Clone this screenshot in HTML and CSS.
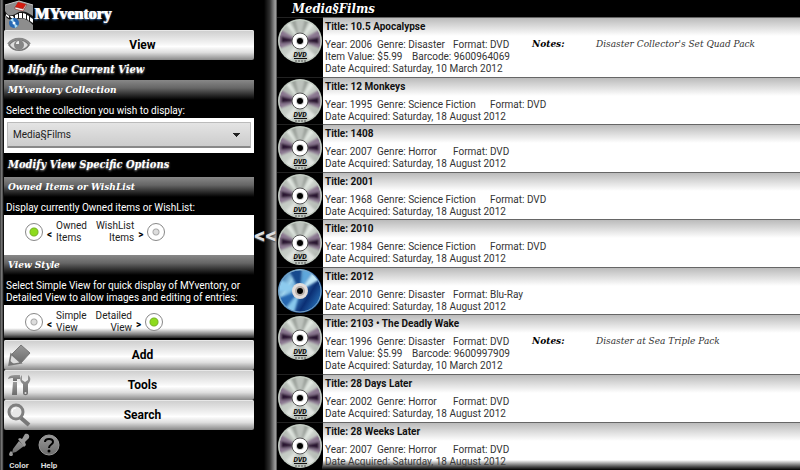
FILE: index.html
```html
<!DOCTYPE html>
<html lang="en">
  <head>
    <meta charset="UTF-8" />
    <meta name="viewport" content="width=device-width, initial-scale=1" />
    <title>MYventory</title>
    <link rel="stylesheet" href="styles.css">
  </head>
  <body>
    <!-- Shared artwork -->
    <svg class="defs" width="0" height="0" aria-hidden="true">
      <defs>
        <linearGradient id="silver" x1="0" y1="0" x2="1" y2="1">
          <stop offset="0" stop-color="#a9b0a9" />
          <stop offset="0.5" stop-color="#c9cfc9" />
          <stop offset="1" stop-color="#aab0aa" />
        </linearGradient>
        <linearGradient id="blue" x1="0" y1="0.2" x2="1" y2="0.8">
          <stop offset="0" stop-color="#1e5b9c" />
          <stop offset="0.25" stop-color="#9fd4ee" />
          <stop offset="0.45" stop-color="#3f86c6" />
          <stop offset="0.7" stop-color="#0b2f74" />
          <stop offset="1" stop-color="#2c7cc2" />
        </linearGradient>
        <linearGradient id="grey" x1="0" y1="0" x2="0" y2="1">
          <stop offset="0" stop-color="#999" />
          <stop offset="1" stop-color="#6c6c6c" />
        </linearGradient>
        <filter id="soft"><feGaussianBlur stdDeviation="1" /></filter>
        <clipPath id="round"><circle cx="22" cy="22" r="21" /></clipPath>
      </defs>
      <symbol id="dvd" viewBox="0 0 44 44">
        <circle cx="22" cy="22" r="22" fill="url(#silver)" />
        <g clip-path="url(#round)">
          <g filter="url(#soft)">
            <path d="M22 22 13 0H31z" fill="#989e98" />
            <path d="M22 22 17 0H27z" fill="#bdc3bd" />
            <path d="M22 22 0 9V30z" fill="#8a7790" />
            <path d="M22 22 3 17V24z" fill="#2b1831" />
            <path d="M22 22 44 9V30z" fill="#8a7790" />
            <path d="M22 22 41 18V25z" fill="#2b1831" />
            <path d="M22 22 5 2 10 0z" fill="#e2e8e2" />
            <path d="M22 22 34 0 39 3z" fill="#e2e8e2" />
            <path d="M22 22 6 39 12 44z" fill="#dfe3df" />
            <path d="M22 22 32 44 39 38z" fill="#dfe3df" />
          </g>
        </g>
        <circle cx="22" cy="22" r="21" fill="none" stroke="#c3cec3" />
        <circle cx="22" cy="22" r="8" fill="#fff" stroke="#555" />
        <circle cx="22" cy="22" r="4" fill="#ccc" />
        <circle cx="22" cy="22" r="3" fill="#000" />
        <path d="M16 39.500H29" stroke="#111" />
        <path d="M17 42H28" stroke="#555" stroke-dasharray="2 1" />
      </symbol>
      <symbol id="bluray" viewBox="0 0 44 44">
        <circle cx="22" cy="22" r="22" fill="url(#blue)" />
        <g clip-path="url(#round)">
          <g filter="url(#soft)">
            <path d="M22 22 10 0H24z" fill="#16498d" />
            <path d="M22 22 26 0H36z" fill="#5ea7db" />
            <path d="M22 22 37 0 44 9z" fill="#bfe6f7" />
            <path d="M22 22 0 9V22z" fill="#8dcbee" />
            <path d="M22 22 0 29 6 40z" fill="#2768b1" />
            <path d="M22 22 6 42 16 44z" fill="#88c8ec" />
          </g>
        </g>
        <circle cx="22" cy="22" r="21" fill="none" stroke="#7ba6c8" />
        <circle cx="22" cy="22" r="8" fill="#e4dedb" />
        <circle cx="22" cy="22" r="5" fill="#b9b0aa" />
        <circle cx="22" cy="22" r="3" fill="#000" />
      </symbol>
    </svg>

    <div class="app">
      <aside class="sidebar">
        <header class="brand">
          <svg class="logo" viewBox="0 0 30 30" aria-hidden="true">
            <path d="M1 5 15 1 29 5V30H1z" fill="#8d8d8d" />
            <path d="M1 5 15 1 29 5" fill="none" stroke="#c8c8c8" />
            <path d="M11 7 14 2 22 4 19 9z" fill="#d51c10" />
            <path d="M11 7v2l8 2 3-5V4l-3 5z" fill="#fff" stroke="#8a0d05" stroke-width="0.500" />
            <path d="M1 11c3 6 7 5 12 2 6-3 10-1 16 3v9c-6-6-10-8-15-6-6 2-11 1-13-4z" fill="#161616" />
            <path d="M2 14l3 2v2l-3-2zM6 16h3l1 2H7zM11 15l3-1v4l-3 1zM15 13l3 0v5l-3 0zM19 13l3 1v5l-3-1zM23 15l2 1v5l-2-2zM26 17l3 2v4l-3-2z" fill="#fff" />
            <circle cx="10" cy="23" r="5" fill="#2769b4" />
            <path d="M10 23 6 20l3-2zM10 23l4 3-3 2z" fill="#a9ddf5" />
            <circle cx="10" cy="23" r="1.500" fill="#fff" />
          </svg>
          <h1>MYventory</h1>
        </header>

        <button class="menu-btn" type="button">
          <svg viewBox="0 0 24 24" aria-hidden="true">
            <path d="M2 12C7 5 17 5 22 12 17 19 7 19 2 12z" fill="#ddd" stroke="#777" stroke-width="1.500" />
            <path d="M1 11C6 4 18 4 23 11" fill="none" stroke="#888" stroke-width="2" />
            <circle cx="12" cy="12" r="5" fill="#858585" />
            <path d="M9 11a3 3 0 0 1 3-3v3z" fill="#eee" />
          </svg>
          View
        </button>

        <h2>Modify the Current View</h2>
        <h3>MYventory Collection</h3>
        <label class="hint" for="collection">Select the collection you wish to display:</label>
        <div class="panel">
          <select id="collection">
            <option>Media§Films</option>
          </select>
        </div>

        <h2 class="tall">Modify View Specific Options</h2>
        <h3>Owned Items or WishList</h3>
        <p class="hint">Display currently Owned items or WishList:</p>
        <div class="panel choices choices-owned">
          <label>
            <input type="radio" name="owned" checked />
            <b>&lt;</b>
            <span>Owned<br />Items</span>
          </label>
          <label class="right">
            <span>WishList<br />Items</span>
            <b>&gt;</b>
            <input type="radio" name="owned" />
          </label>
        </div>

        <h3>View Style</h3>
        <p class="hint">Select Simple View for quick display of MYventory, or Detailed View to allow images and editing of entries:</p>
        <div class="panel choices fade">
          <label>
            <input type="radio" name="style" />
            <b>&lt;</b>
            <span>Simple<br />View</span>
          </label>
          <label class="right">
            <span>Detailed<br />View</span>
            <b>&gt;</b>
            <input type="radio" name="style" checked />
          </label>
        </div>

        <button class="menu-btn" type="button">
          <svg viewBox="0 0 24 24" aria-hidden="true">
            <path d="M14 2 23 10 14 20 5 11z" fill="url(#grey)" stroke="#777" />
            <path d="M4 11 14 20 2 22z" fill="#ddd" stroke="#777" stroke-width="1.500" />
            <path d="M2 22l0-5 5 4z" fill="#777" />
          </svg>
          Add
        </button>
        <button class="menu-btn" type="button">
          <svg viewBox="0 0 24 24" aria-hidden="true">
            <path d="M1 6C2 2 5 2 13 2v4h-3v2H6V5C4 5 3 5 1 6z" fill="url(#grey)" />
            <path d="M6 9h4v13H5z" fill="url(#grey)" />
            <path d="M15 2v5l3 2 3-2V2c4 3 2 7 0 9v9c0 3-5 3-5 0v-9c-3-2-4-6-1-9z" fill="url(#grey)" />
            <circle cx="18.500" cy="20" r="1" fill="#ddd" />
          </svg>
          Tools
        </button>
        <button class="menu-btn" type="button">
          <svg viewBox="0 0 24 24" aria-hidden="true">
            <path d="M14 15 22 22" stroke="#777" stroke-width="4" />
            <circle cx="9" cy="9" r="7" fill="#e8e8e8" stroke="#808080" stroke-width="3" />
            <path d="M5 9a4 4 0 0 1 4-4" fill="none" stroke="#fff" stroke-width="1" />
          </svg>
          Search
        </button>

        <nav class="tools">
          <button type="button">
            <svg viewBox="0 0 24 24" aria-hidden="true">
              <path d="M12 8 17 13 9 19 5 20 6 16z" fill="url(#grey)" />
              <path d="M11 6 13 5 15 6 18 1c3-1 5 1 4 4l-4 4 1 3-2 2z" fill="#999" />
              <path d="M4 18c3 3 2 5 0 5s-3-2 0-5z" fill="#999" />
            </svg>
            Color
          </button>
          <button type="button">
            <svg viewBox="0 0 24 24" aria-hidden="true">
              <circle cx="12" cy="12" r="10" fill="url(#grey)" stroke="#999" />
              <path d="M8 9c0-4 8-4 8 0 0 3-4 2-4 6" fill="none" stroke="#000" stroke-width="2" />
              <circle cx="12" cy="18" r="1.500" fill="#000" />
            </svg>
            Help
          </button>
        </nav>
      </aside>

      <button class="divider" type="button" aria-label="Hide the menu">&lt;&lt;</button>

      <main class="content">
        <h2 class="list-title">Media§Films</h2>
        <ul class="items">
          <li>
            <div class="cover"><svg viewBox="0 0 44 44"><use href="#dvd" /><text x="22" y="38">DVD</text></svg></div>
            <div class="info">
              <h4>Title: 10.5 Apocalypse</h4>
              <p><span class="year">Year: 2006</span><span class="genre">Genre: Disaster</span><span>Format: DVD</span></p>
              <p><span class="value">Item Value: $5.99</span><span>Barcode: 9600964069</span></p>
              <p>Date Acquired: Saturday, 10 March 2012</p>
            </div>
            <p class="notes"><b>Notes:</b><i>Disaster Collector's Set Quad Pack</i></p>
          </li>
          <li>
            <div class="cover"><svg viewBox="0 0 44 44"><use href="#dvd" /><text x="22" y="38">DVD</text></svg></div>
            <div class="info">
              <h4>Title: 12 Monkeys</h4>
              <p><span class="year">Year: 1995</span><span class="genre long">Genre: Science Fiction</span><span>Format: DVD</span></p>
              <p>Date Acquired: Saturday, 18 August 2012</p>
            </div>
          </li>
          <li>
            <div class="cover"><svg viewBox="0 0 44 44"><use href="#dvd" /><text x="22" y="38">DVD</text></svg></div>
            <div class="info">
              <h4>Title: 1408</h4>
              <p><span class="year">Year: 2007</span><span class="genre">Genre: Horror</span><span>Format: DVD</span></p>
              <p>Date Acquired: Saturday, 18 August 2012</p>
            </div>
          </li>
          <li>
            <div class="cover"><svg viewBox="0 0 44 44"><use href="#dvd" /><text x="22" y="38">DVD</text></svg></div>
            <div class="info">
              <h4>Title: 2001</h4>
              <p><span class="year">Year: 1968</span><span class="genre long">Genre: Science Fiction</span><span>Format: DVD</span></p>
              <p>Date Acquired: Saturday, 18 August 2012</p>
            </div>
          </li>
          <li>
            <div class="cover"><svg viewBox="0 0 44 44"><use href="#dvd" /><text x="22" y="38">DVD</text></svg></div>
            <div class="info">
              <h4>Title: 2010</h4>
              <p><span class="year">Year: 1984</span><span class="genre long">Genre: Science Fiction</span><span>Format: DVD</span></p>
              <p>Date Acquired: Saturday, 18 August 2012</p>
            </div>
          </li>
          <li>
            <div class="cover"><svg viewBox="0 0 44 44"><use href="#bluray" /></svg></div>
            <div class="info">
              <h4>Title: 2012</h4>
              <p><span class="year">Year: 2010</span><span class="genre">Genre: Disaster</span><span>Format: Blu-Ray</span></p>
              <p>Date Acquired: Saturday, 18 August 2012</p>
            </div>
          </li>
          <li>
            <div class="cover"><svg viewBox="0 0 44 44"><use href="#dvd" /><text x="22" y="38">DVD</text></svg></div>
            <div class="info">
              <h4>Title: 2103 • The Deadly Wake</h4>
              <p><span class="year">Year: 1996</span><span class="genre">Genre: Disaster</span><span>Format: DVD</span></p>
              <p><span class="value">Item Value: $5.99</span><span>Barcode: 9600997909</span></p>
              <p>Date Acquired: Saturday, 10 March 2012</p>
            </div>
            <p class="notes"><b>Notes:</b><i>Disaster at Sea Triple Pack</i></p>
          </li>
          <li>
            <div class="cover"><svg viewBox="0 0 44 44"><use href="#dvd" /><text x="22" y="38">DVD</text></svg></div>
            <div class="info">
              <h4>Title: 28 Days Later</h4>
              <p><span class="year">Year: 2002</span><span class="genre">Genre: Horror</span><span>Format: DVD</span></p>
              <p>Date Acquired: Saturday, 18 August 2012</p>
            </div>
          </li>
          <li>
            <div class="cover"><svg viewBox="0 0 44 44"><use href="#dvd" /><text x="22" y="38">DVD</text></svg></div>
            <div class="info">
              <h4>Title: 28 Weeks Later</h4>
              <p><span class="year">Year: 2007</span><span class="genre">Genre: Horror</span><span>Format: DVD</span></p>
              <p>Date Acquired: Saturday, 18 August 2012</p>
            </div>
          </li>
        </ul>
      </main>
    </div>
  </body>
</html>
```

FILE: styles.css
```css
:root {
  --serif: "Droid Serif", "DejaVu Serif Condensed", "DejaVu Serif", serif;
  --sans: Roboto, "Liberation Sans", sans-serif;
}
* {
  box-sizing: border-box;
}
body {
  margin: 0;
  background: #000;
  color: #fff;
  font-family: var(--sans);
  font-size: 10px;
  line-height: 12px;
}
h1, h2, h3, h4, p, ul {
  margin: 0;
  padding: 0;
}
button {
  font-family: inherit;
  cursor: pointer;
}
.defs {
  position: absolute;
}
.app {
  display: grid;
  grid-template-columns: 254px 23px 1fr;
  min-height: 100vh;
}

/* Sidebar */
.sidebar {
  display: flex;
  flex-direction: column;
  padding-left: 4px;
  background: linear-gradient(to right, #333, #888 2px, #222 3px, #000 4px);
}
.brand {
  display: flex;
  height: 30px;
}
.logo {
  width: 30px;
  height: 30px;
}
.brand h1 {
  font-family: "Liberation Serif", serif;
  font-size: 16px;
  line-height: 28px;
  text-shadow: 1px 0 0 #fff, 0 1px 2px #4a8ad8;
}
.menu-btn {
  display: grid;
  grid-template-columns: 24px 1fr;
  align-items: center;
  height: 30px;
  padding: 0 0 0 3px;
  border: 0;
  border-radius: 2px;
  background: linear-gradient(#ccc, #f4f4f4 45%, #fff 55%, #ddd 75%, #888);
  box-shadow: inset 0 1px 0 #e8e8e8;
  color: #000;
  font-size: 12px;
  font-weight: 700;
  text-align: center;
}
.menu-btn svg {
  width: 24px;
  height: 24px;
}
.sidebar h2 {
  padding-left: 4px;
  font: italic bold 11px/20px var(--serif);
  text-shadow: 0 1px 2px #aaa;
}
.sidebar h2.tall {
  line-height: 24px;
}
.sidebar h3 {
  padding-left: 4px;
  background: linear-gradient(#888, #666 40%, #000);
  font: italic bold 10px/20px var(--serif);
}
.hint {
  padding: 5px 2px 1px;
}
.panel {
  background: #fff;
  color: #222;
  padding: 4px 3px 3px;
}
.panel select {
  appearance: none;
  display: block;
  width: 100%;
  height: 26px;
  margin-bottom: 2px;
  padding: 0 5px;
  border: 1px solid #bbb;
  border-bottom: 2px solid #888;
  border-radius: 1px;
  background:
    linear-gradient(to bottom left, #222 50%, transparent 50%) right 13px center / 4px 4px no-repeat,
    linear-gradient(to bottom right, #222 50%, transparent 50%) right 9px center / 4px 4px no-repeat,
    linear-gradient(#e4e4e4, #ccc);
  color: #222;
  font: 10px var(--sans);
}
.choices {
  display: flex;
  padding: 4px 21px;
  gap: 9px;
}
.choices-owned {
  min-height: 40px;
}
.choices label {
  display: flex;
  align-items: center;
  height: 26px;
}
.choices b {
  padding-top: 6px;
  margin: 0 4px;
  color: #000;
}
.choices .right {
  text-align: right;
}
.choices input {
  appearance: none;
  width: 18px;
  height: 18px;
  margin: 0;
  border: 1px solid #888;
  border-radius: 50%;
  background: radial-gradient(circle, #ddd 2px, #aaa 3px, #fff 4px);
}
.choices input:checked {
  background: radial-gradient(circle, #8ddb1c 3px, #7ab52a 4px, #fff 5px);
}
.fade {
  padding-bottom: 3px;
  margin-bottom: 2px;
  background: linear-gradient(#fff 70%, #777 90%, #222);
}

.tools {
  display: flex;
  padding: 3px 0 0;
}
.tools button {
  display: flex;
  flex-direction: column;
  align-items: center;
  width: 30px;
  padding: 0;
  border: 0;
  background: none;
  color: #ddd;
  font-size: 8px;
  font-weight: 700;
  gap: 4px;
}
.tools svg {
  width: 24px;
  height: 24px;
}

/* Drawer handle */
.divider {
  padding: 0;
  border: 0;
  background: linear-gradient(to right, #000 10px, #333 16px, #999 21px, #999 22px, #222 23px);
  color: #ddd;
  font-size: 22px;
  font-weight: 700;
  text-shadow: 0 1px 1px #555;
}

/* Item list */
.content {
  position: relative;
  display: flex;
  flex-direction: column;
  padding-bottom: 1px;
}
.content::after {
  content: "";
  position: absolute;
  inset: auto 0 0 45px;
  height: 10px;
  background: linear-gradient(transparent, #444 70%, #000);
  pointer-events: none;
}
.list-title {
  padding-left: 15px;
  font: italic bold 13px/17px var(--serif);
}
.items {
  display: flex;
  flex: 1;
  flex-direction: column;
  list-style: none;
}
.items li {
  display: flex;
  flex: 1 0 auto;
}
.cover {
  width: 46px;
  padding: 1px 0 0 1px;
  border-top: 1px solid #222;
}
.cover svg {
  display: block;
  width: 44px;
  height: 44px;
}
.cover text {
  fill: #000;
  font: italic bold 7px var(--sans);
  text-anchor: middle;
}
.info,
.notes {
  border-top: 1px solid #666;
  background: linear-gradient(#bbb, #fff 18px);
  color: #333;
}
.info {
  flex: 1;
  padding-left: 2px;
}
.info h4 {
  padding: 3px 0 6px;
  color: #111;
  font-size: 10px;
  font-weight: 700;
}
.info p {
  display: flex;
}
.year {
  min-width: 52px;
}
.genre {
  min-width: 76px;
}
.genre.long {
  min-width: 113px;
}
.value {
  min-width: 87px;
}
.notes {
  display: flex;
  width: 268px;
  padding-top: 20px;
  font-family: var(--serif);
  white-space: nowrap;
}
.notes b {
  width: 64px;
  color: #000;
  font-style: italic;
}
```
